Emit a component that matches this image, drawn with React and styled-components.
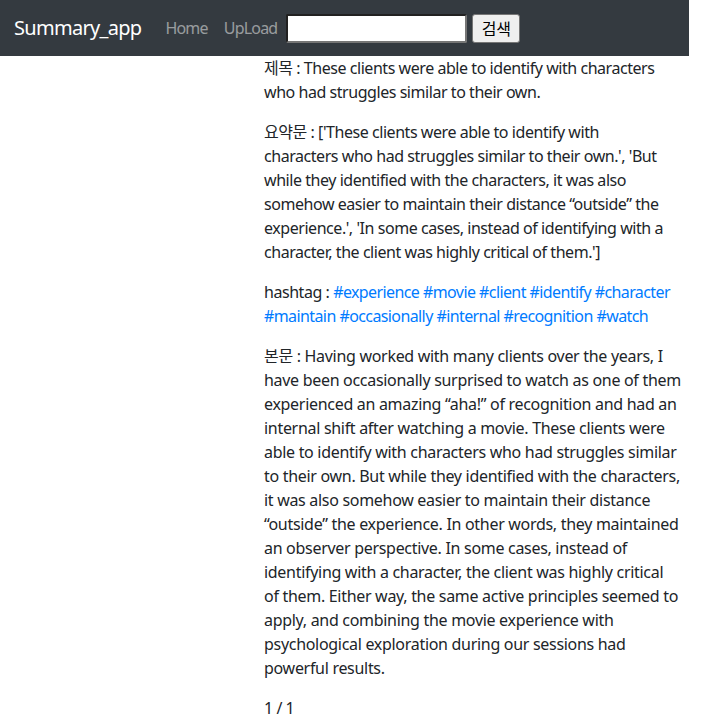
import React from "react";
import styled, { createGlobalStyle, css } from "styled-components";

const Global = createGlobalStyle`
  html, body { margin: 0; padding: 0; background: #fff; }
  body {
    font-family: "Noto Sans", "Noto Sans CJK KR", sans-serif;
    font-size: 16px;
    line-height: 24px;
    letter-spacing: -0.45px;
    color: #212529;
  }
`;

const Page = styled.div`
  width: 689px;
`;

const Navbar = styled.nav`
  display: flex;
  align-items: center;
  height: 56px;
  box-sizing: border-box;
  padding: 8px 16px 8px 14px;
  background: #343a40;
`;

const Brand = styled.a`
  font-size: 20px;
  line-height: 30px;
  letter-spacing: -0.7px;
  color: #fff;
  margin-right: 16px;
  text-decoration: none;
`;

const NavLink = styled.a`
  padding: 8px;
  letter-spacing: -0.8px;
  color: rgba(255, 255, 255, 0.5);
  text-decoration: none;
`;

const SearchForm = styled.form`
  display: flex;
  align-items: center;
  gap: 5px;
  margin: 0 0 0 1px;
`;

const SearchInput = styled.input`
  box-sizing: border-box;
  width: 181px;
  height: 29px;
  border: 2px inset #767676;
  border-color: #767676;
  border-radius: 2px;
  background: #fff;
  padding: 1px 2px;
  font-size: 16px;
`;

const SearchButton = styled.button`
  box-sizing: border-box;
  width: 48px;
  height: 29px;
  border: 1px solid #767676;
  border-radius: 3px;
  background: #efefef;
  color: #000;
  font-family: "Noto Sans CJK KR", sans-serif;
  font-size: 16px;
  padding: 0;
`;

const Content = styled.main`
  margin-left: 264px;
  width: 409px;
`;

const Para = styled.p`
  margin: 0 0 16px;
  ${(p) =>
    p.$long &&
    css`
      width: 417.5px;
      letter-spacing: -0.3px;
    `}
`;

const Tag = styled.a`
  color: #007bff;
  letter-spacing: -0.6px;
  text-decoration: none;
`;

const summary =
  "['These clients were able to identify with characters who had struggles similar to their own.', 'But while they identified with the characters, it was also somehow easier to maintain their distance \u201Coutside\u201D the experience.', 'In some cases, instead of identifying with a character, the client was highly critical of them.']";

const body =
  "Having worked with many clients over the years, I have been occasionally surprised to watch as one of them experienced an amazing \u201Caha!\u201D of recognition and had an internal shift after watching a movie. These clients were able to identify with characters who had struggles similar to their own. But while they identified with the characters, it was also somehow easier to maintain their distance \u201Coutside\u201D the experience. In other words, they maintained an observer perspective. In some cases, instead of identifying with a character, the client was highly critical of them. Either way, the same active principles seemed to apply, and combining the movie experience with psychological exploration during our sessions had powerful results.";

const tags = [
  "experience",
  "movie",
  "client",
  "identify",
  "character",
  "maintain",
  "occasionally",
  "internal",
  "recognition",
  "watch",
];

export default function App() {
  return (
    <Page>
      <Global />
      <Navbar>
        <Brand href="#">Summary_app</Brand>
        <NavLink href="#">Home</NavLink>
        <NavLink href="#">UpLoad</NavLink>
        <SearchForm onSubmit={(e) => e.preventDefault()}>
          <SearchInput type="text" />
          <SearchButton type="submit">검색</SearchButton>
        </SearchForm>
      </Navbar>
      <Content>
        <Para>제목 : These clients were able to identify with characters who had struggles similar to their own.</Para>
        <Para>요약문 : {summary}</Para>
        <Para>
          hashtag :{" "}
          {tags.map((t, i) => (
            <React.Fragment key={t}>
              <Tag href="#">#{t}</Tag>
              {i < tags.length - 1 ? " " : ""}
            </React.Fragment>
          ))}
        </Para>
        <Para $long>본문 : {body}</Para>
        <Para>1 / 1</Para>
      </Content>
    </Page>
  );
}
